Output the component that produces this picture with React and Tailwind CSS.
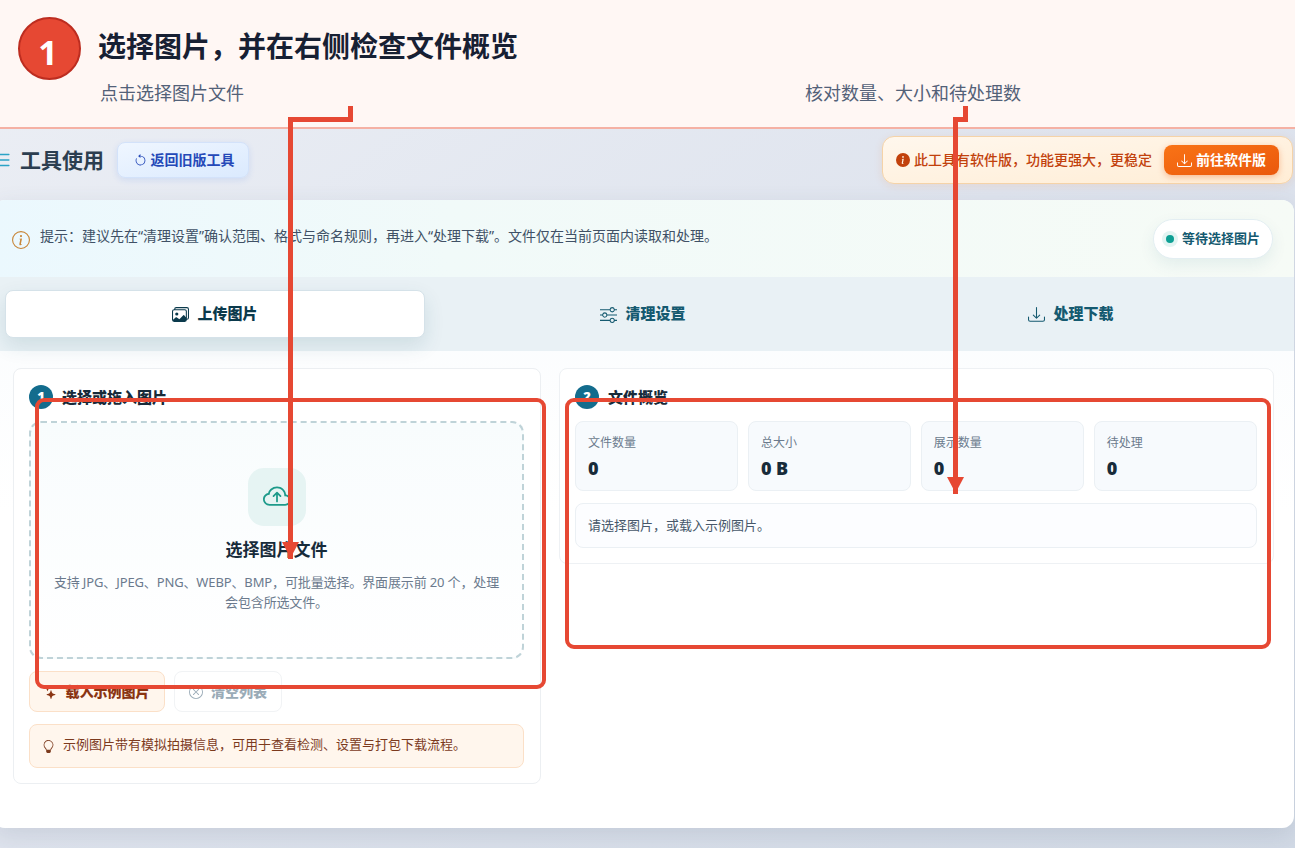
import {
  BsArrowCounterclockwise,
  BsCloudArrowUp,
  BsDownload,
  BsImages,
  BsInfoCircle,
  BsInfoCircleFill,
  BsLightbulb,
  BsList,
  BsSliders,
  BsStars,
  BsXCircle,
} from "react-icons/bs";

const tabs = [
  { label: "上传图片", icon: BsImages, active: true },
  { label: "清理设置", icon: BsSliders },
  { label: "处理下载", icon: BsDownload },
];

const stats = [
  { label: "文件数量", value: "0" },
  { label: "总大小", value: "0 B" },
  { label: "展示数量", value: "0" },
  { label: "待处理", value: "0" },
];

const GuideHeader = () => (
  <header className="h-[129px] border-b-2 border-[#f5b1a4] bg-[#fff7f4] flex pl-[18px] pt-[17px]">
    <div className="size-[63px] shrink-0 rounded-full border-2 border-[#bd2d20] bg-[#e64833] text-white text-[34px] font-bold leading-none flex justify-center pt-[16px] pr-[3px]">
      1
    </div>
    <div className="ml-[17px] flex-1">
      <h1 className="text-[28px] leading-[40px] mt-[9px] font-bold text-[#172033]">
        选择图片，并在右侧检查文件概览
      </h1>
      <div className="flex text-[18px] leading-[26px] mt-[14px] pl-[2px] text-[#536178]">
        <p className="w-[705px]">点击选择图片文件</p>
        <p>核对数量、大小和待处理数</p>
      </div>
    </div>
  </header>
);

const Toolbar = () => (
  <div className="h-[71px] flex items-start justify-between pr-[2px]">
    <div className="flex items-center pt-[12px]">
      <BsList className="-ml-[9px] size-[22px] text-[#2ba3c6]" />
      <h2 className="ml-[7px] text-[21px] leading-[38px] font-semibold text-[#2c3e50]">
        工具使用
      </h2>
      <button className="ml-[13px] h-[36px] w-[132px] flex items-center justify-center gap-[4px] rounded-lg border border-[#d3e2fa] bg-linear-to-br from-[#eff6ff] to-[#dbeafe] pl-[2px] text-sm font-semibold text-[#2549b8] shadow-[0_2px_6px_rgba(37,99,235,0.12)]">
        <BsArrowCounterclockwise className="size-[13px]" />
        返回旧版工具
      </button>
    </div>
    <div className="mt-[7px] h-[48px] w-[411px] flex items-center rounded-xl border border-[#f5d3a8] bg-linear-to-br from-[#fff7ed] to-[#ffedd5] pl-[13px] shadow-[0_2px_8px_rgba(249,115,22,0.12)]">
      <BsInfoCircleFill className="size-[14px] text-[#c2410c]" />
      <span className="ml-[4px] text-sm font-medium text-[#c2410c]">
        此工具有软件版，功能更强大，更稳定
      </span>
      <button className="ml-[12px] h-[30px] w-[115px] flex items-center justify-center gap-1 rounded-lg bg-linear-to-br from-[#f97316] to-[#ea580c] text-sm font-bold text-white shadow-[0_2px_6px_rgba(234,88,12,0.35)]">
        <BsDownload className="size-[15px]" />
        前往软件版
      </button>
    </div>
  </div>
);

const StepTitle = ({ step, children }) => (
  <div className="flex items-center gap-[9px] h-6">
    <span className="size-6 rounded-full bg-[#136c8d] text-white text-[13px] font-black flex items-center justify-center">
      {step}
    </span>
    <h3 className="text-[15px] leading-6 font-black text-[#172b3a]">{children}</h3>
  </div>
);

const UploadPanel = () => (
  <section className="w-[528px] h-[416px] rounded-lg border border-[#eceff2] bg-white px-[15px] pt-4">
    <StepTitle step="1">选择或拖入图片</StepTitle>
    <div className="mt-[12px] h-[238px] w-[495px] rounded-xl border-2 border-dashed border-[#bfd3d8] bg-linear-to-b from-[#f8fcfd] to-white flex flex-col items-center pt-[45px]">
      <div className="size-[58px] rounded-2xl bg-[#e6f4f3] flex items-center justify-center">
        <BsCloudArrowUp className="size-[28px] text-[#1d9a8a]" />
      </div>
      <h4 className="mt-[11px] text-[17px] leading-[26px] font-semibold text-[#172b3a]">
        选择图片文件
      </h4>
      <p className="mt-[9px] w-[454px] text-center text-[13px] leading-[20px] tracking-[-0.13px] text-[#6b7a8d]">
        支持 JPG、JPEG、PNG、WEBP、BMP，可批量选择。界面展示前 20 个，处理会包含所选文件。
      </p>
    </div>
    <div className="mt-[12px] flex gap-[9px]">
      <button className="h-[41px] w-[136px] rounded-lg border border-[#fbe0c8] bg-[#fff6ed] pr-px text-sm font-black text-[#8a3412] flex items-center justify-center gap-2">
        <BsStars className="size-[14px]" />
        载入示例图片
      </button>
      <button className="h-[41px] w-[108px] rounded-lg border border-[#f1f3f5] bg-white text-sm font-black text-[#9aabb7] flex items-center justify-center gap-2">
        <BsXCircle className="size-[14px]" />
        清空列表
      </button>
    </div>
    <div className="mt-[12px] h-[44px] w-[495px] rounded-lg border border-[#fbe0c8] bg-[#fff6ed] text-[13px] text-[#7c3a1d] flex items-center gap-2 pl-[12px] pb-[2px]">
      <BsLightbulb className="mt-[3px] size-[13px]" />
      示例图片带有模拟拍摄信息，可用于查看检测、设置与打包下载流程。
    </div>
  </section>
);

const OverviewPanel = () => (
  <section className="w-[715px] h-[196px] rounded-lg border border-[#eef1f4] bg-white pl-[15px] pr-[16px] pt-4">
    <StepTitle step="2">文件概览</StepTitle>
    <div className="mt-[12px] grid grid-cols-4 gap-[9.5px]">
      {stats.map(({ label, value }) => (
        <div
          key={label}
          className="h-[70px] rounded-lg border border-[#ebf0f4] bg-[#f7fafd] pl-[12px] pt-[11px]"
        >
          <p className="text-xs leading-[19px] text-[#6b7a8d]">{label}</p>
          <p className="mt-[3px] text-[18px] leading-[26px] font-black text-[#172b3a]">
            {value}
          </p>
        </div>
      ))}
    </div>
    <div className="mt-[12px] h-[45px] rounded-lg border border-[#ebf0f4] bg-[#fcfdff] flex items-center pl-[12px] text-[13px] text-[#47586a]">
      请选择图片，或载入示例图片。
    </div>
  </section>
);

// Highlight frames and arrows of the guide, drawn over the page
const Annotations = () => (
  <div className="pointer-events-none absolute inset-0">
    <div className="absolute left-[35px] top-[398px] w-[511px] h-[291px] rounded-[9px] border-4 border-[#e64833]" />
    <div className="absolute left-[565px] top-[398px] w-[706px] h-[251px] rounded-[9px] border-4 border-[#e64833]" />
    <svg
      className="absolute inset-0"
      width="1295"
      height="848"
      fill="none"
      stroke="#e64833"
      strokeWidth="5"
    >
      <path d="M350.5 106V119.5H290.5V559" />
      <path d="M965.5 106V119.5H955.5V494" />
      <path d="M282 542H299L290.5 558Z" fill="#e64833" stroke="none" />
      <path d="M947 477H964L955.5 493Z" fill="#e64833" stroke="none" />
    </svg>
  </div>
);

const App = () => {
  return (
    <div className="relative h-[848px] w-[1295px] overflow-hidden bg-linear-to-br from-[#eceff5] via-[#dfe4ee] to-[#d2dae6] font-['Noto_Sans','Noto_Sans_CJK_SC',sans-serif]">
      <GuideHeader />
      <Toolbar />

      <main className="-ml-[7px] w-[1301px] h-[628px] overflow-hidden rounded-xl bg-linear-to-b from-[#f8fbfd] to-white to-50% shadow-[0_8px_24px_rgba(71,85,105,0.14)]">
        <div className="h-[77px] flex items-start justify-between bg-linear-to-r from-[#ebf8fe] via-[#f1faf9] via-35% to-[#f6fbf6] pl-[19px] pr-[21px] pt-[19px]">
          <div className="flex gap-[10px] text-sm text-[#405166]">
            <BsInfoCircle className="mt-[12px] size-[18px] text-[#c8873a]" />
            <p className="leading-[34px]">
              提示：建议先在“清理设置”确认范围、格式与命名规则，再进入“处理下载”。文件仅在当前页面内读取和处理。
            </p>
          </div>
          <div className="h-[40px] w-[120px] flex items-center justify-center gap-[8px] rounded-full border border-[#e3eef2] bg-white text-[13px] font-bold text-[#155a70] shadow-[0_6px_16px_rgba(15,90,110,0.08)]">
            <span className="size-2 rounded-full bg-[#0d9f94] shadow-[0_0_0_4px_#e2f4f2]" />
            等待选择图片
          </div>
        </div>

        <nav className="h-[74px] grid grid-cols-3 gap-2 bg-[#e9f1f5] pl-[12px] pr-[13px] pt-[13px]">
          {tabs.map(({ label, icon: Icon, active }) => (
            <button
              key={label}
              className={`h-[48px] rounded-lg flex items-center justify-center gap-2 text-[15px] font-black ${
                active
                  ? "border border-[#d5e2e9] bg-white text-[#0b3a4c] shadow-[0_8px_20px_rgba(15,80,100,0.12)]"
                  : "text-[#155a70]"
              }`}
            >
              <Icon className="size-[17px]" />
              <span className="pb-[2px]">{label}</span>
            </button>
          ))}
        </nav>

        <div className="flex items-start gap-[18px] px-[20px] pt-[17px]">
          <UploadPanel />
          <OverviewPanel />
        </div>
      </main>

      <Annotations />
    </div>
  );
};

export default App;
